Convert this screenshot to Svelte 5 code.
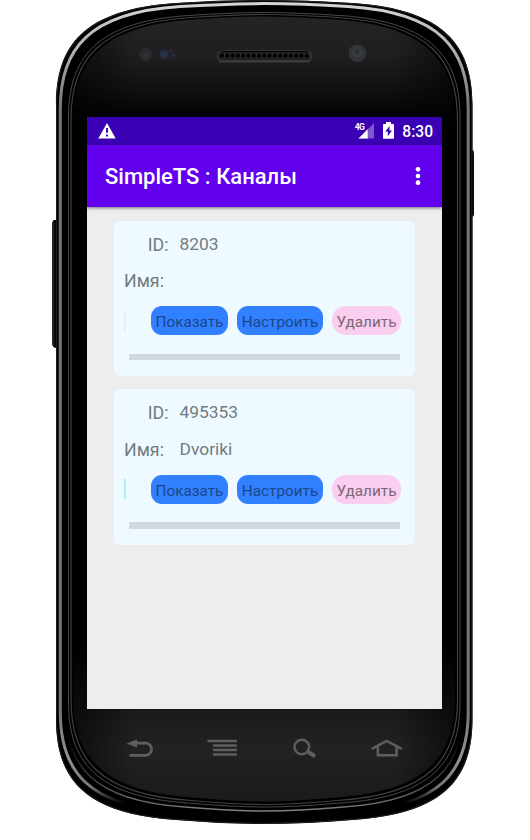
<script>
  const channels = [
    { id: '8203', name: '', mark: '#e3eff7' },
    { id: '495353', name: 'Dvoriki', mark: '#aeeeee' }
  ];

  // Rounded phone contour inset to the given left, top and bottom edges.
  function contour(l, t, b) {
    const r = 528.5 - l;
    return `M${l} ${t + 105}C${l} ${t + 47} ${l + 26} ${t + 9} ${l + 120} ${t + 3}` +
      `Q${l + 165} ${t} 264 ${t}T${r - 120} ${t + 3}` +
      `C${r - 26} ${t + 9} ${r} ${t + 47} ${r} ${t + 105}V${b - 105}` +
      `C${r} ${b - 47} ${r - 26} ${b - 10} ${r - 120} ${b - 4}` +
      `Q${r - 165} ${b} 264 ${b}T${l + 120} ${b - 4}` +
      `C${l + 26} ${b - 10} ${l} ${b - 47} ${l} ${b - 105}Z`;
  }
  const holes = Array.from({ length: 17 }, (_, i) => 222 + i * 5.3);
</script>

<main class="phone">
  <svg class="shell" width="530" height="840" viewBox="0 0 530 840" aria-hidden="true">
    <defs>
      <linearGradient id="rim" x1="0" y1="0" x2="0" y2="824" gradientUnits="userSpaceOnUse">
        <stop offset="0" stop-color="#d8d8d8" />
        <stop offset=".06" stop-color="#b0b0b0" />
        <stop offset=".13" stop-color="#777" />
        <stop offset=".86" stop-color="#777" />
        <stop offset=".92" stop-color="#909090" />
        <stop offset=".955" stop-color="#777" />
        <stop offset=".975" stop-color="#000" />
        <stop offset="1" stop-color="#000" />
      </linearGradient>
      <linearGradient id="lower" x1="0" y1="740" x2="0" y2="811" gradientUnits="userSpaceOnUse">
        <stop offset="0" stop-color="#777" stop-opacity="0" />
        <stop offset=".6" stop-color="#777" stop-opacity=".6" />
        <stop offset="1" stop-color="#808080" />
      </linearGradient>
      <linearGradient id="glass" x1="0" y1="14" x2="0" y2="803" gradientUnits="userSpaceOnUse">
        <stop offset="0" stop-color="#242424" />
        <stop offset=".05" stop-color="#1f1f1f" />
        <stop offset=".09" stop-color="#121212" />
        <stop offset=".13" stop-color="#030303" />
        <stop offset=".2" stop-color="#000" />
        <stop offset=".8" stop-color="#000" />
        <stop offset=".885" stop-color="#1a1a1a" />
        <stop offset=".93" stop-color="#222" />
        <stop offset="1" stop-color="#1a1a1a" />
      </linearGradient>
      <linearGradient id="side" x1="73" y1="0" x2="455.5" y2="0" gradientUnits="userSpaceOnUse">
        <stop offset="0" stop-color="#000" stop-opacity=".6" />
        <stop offset=".16" stop-color="#000" stop-opacity="0" />
        <stop offset=".84" stop-color="#000" stop-opacity="0" />
        <stop offset="1" stop-color="#000" stop-opacity=".6" />
      </linearGradient>
    </defs>
    <path d="M57 220h-3q-2 1-2 5v118q0 5 5 5zM471 150h2q1 1 1 4v60q0 3-3 3z" fill="#080808" />
    <path d="M53 223v122" stroke="#444" />
    <path d={contour(56, 0, 824)} fill="#000" />
    <path d={contour(56.6, .6, 823.4)} fill="none" stroke="#222" />
    <path d={contour(60.3, 3.6, 817)} fill="none" stroke="url(#rim)" stroke-width="3" />
    <path d={contour(65, 9, 811)} fill="none" stroke="url(#lower)" stroke-width="1.5" />
    <path d={contour(68.5, 12.500, 807)} fill="none" stroke="#484848" />
    <path d={contour(71, 14.500, 804.500)} fill="none" stroke="#404040" stroke-width="1.2" />
    <path d={contour(72.300, 15.500, 803)} fill="#000" />
    <path d={contour(73.500, 16.500, 801.500)} fill="url(#glass)" />
    <path d={contour(73.500, 16.500, 801.500)} fill="url(#side)" />

    <circle cx="145.8" cy="54.3" r="6.4" fill="#2c2b30" />
    <circle cx="145.8" cy="55" r="2.500" fill="#302f3c" />
    <rect x="158" y="48.5" width="20" height="11.5" rx="5.5" fill="#212328" />
    <circle cx="164" cy="54" r="4" fill="#253046" />
    <path d="M161 53q3 3 6 0M172 55l3 1" stroke="#353f57" fill="none" />
    <rect x="217.5" y="51" width="94" height="10" rx="4.5" fill="#202020" stroke="#383838" stroke-width="1.5" />
    <path d="M221 51.500h87" stroke="#050505" />
    <path d="M219 61.8h91" stroke="#4c4c4c" />
    {#each holes as x}
      <circle cx={x} cy="55.5" r="2.1" fill="#000" />
      <circle cx={x + 2.6} cy="54.500" r=".7" fill="#484848" />
    {/each}
    <circle cx="357.3" cy="53.2" r="8.8" fill="#31353a" />
    <circle cx="357.3" cy="52.2" r="5" fill="#373b42" />
    <circle cx="357.3" cy="51.6" r="2.2" fill="#282d35" />

    <g fill="none" stroke="#5e5e5e">
      <path d="M134 743.2h11.5a5.9 5.9 0 0 1 0 12.2H129.5" stroke-width="2.8" />
      <path d="M126.500 743.500l10.500-4v8z" fill="#5e5e5e" stroke="none" />
      <path d="M207.500 740.900h29.300M213 745.500h23.800M213 750.100h23.800M213 754.600h23.800" stroke-width="2.500" />
      <circle cx="301.8" cy="747" r="7.300" stroke-width="2.400" />
      <path d="M307.2 751.5l2.6 2" stroke-width="3" />
      <path d="M309.5 752.800l4.200 2.700" stroke-width="4" stroke-linecap="round" />
      <path d="M372.700 748.400L386.700 741L400.800 748.400" stroke-width="2.500" stroke-linecap="round" />
      <path d="M377.800 747v8.200H396.600v-8.200" stroke-width="2.500" />
    </g>
  </svg>

  <section class="screen">
    <div class="status">
      <svg class="warning" width="18" height="16" viewBox="0 0 18 16">
        <path d="M9 0L17.7 15.5H.3z" fill="#fff" />
        <path d="M9 5v4.8M9 11.4v2.2" stroke="#3a00b3" stroke-width="1.9" />
      </svg>
      <div class="network">
        <span class="generation">4G</span>
        <svg width="16" height="16" viewBox="0 0 16 16">
          <path d="M16 0v15.5H.5z" fill="#fff" opacity=".35" />
          <path d="M9.700 6.200v9.300H.5z" fill="#fff" />
        </svg>
      </div>
      <svg class="battery" width="11" height="17" viewBox="0 0 11 17">
        <path d="M3 0h5v2h2.200q.8 0 .8.8v13.200q0 .7-.8.7H.8Q0 16.700 0 16V2.800Q0 2 .8 2H3z" fill="#fff" />
        <path d="M6.700 4L2.200 9.500h2.600v4.700L9 8.500H6.400z" fill="#3a00b3" />
      </svg>
      <time>8:30</time>
    </div>
    <header>
      <h1>SimpleTS : Каналы</h1>
      <svg width="6" height="18" viewBox="0 0 6 18" fill="#fff">
        <circle cx="3" cy="2.300" r="2.350" /><circle cx="3" cy="9" r="2.350" /><circle cx="3" cy="15.700" r="2.350" />
      </svg>
    </header>
    <div class="list">
      {#each channels as channel}
        <article>
          <dl>
            <dt class="id">ID:</dt><dd>{channel.id}</dd>
            <dt>Имя:</dt><dd>{channel.name}</dd>
          </dl>
          <div class="actions">
            <i style:background={channel.mark}></i>
            <button class="show">Показать</button>
            <button class="setup">Настроить</button>
            <button class="remove">Удалить</button>
          </div>
          <div class="progress"></div>
        </article>
      {/each}
    </div>
  </section>
</main>

<style>
  :global(body) { margin: 0; background: #fff; }
  .phone {
    position: relative;
    box-sizing: border-box;
    width: 530px;
    height: 840px;
    padding: 117px 88px 0 87px;
    overflow: hidden;
    font-family: Roboto, sans-serif;
  }
  .shell { position: absolute; inset: 0; }
  .screen {
    position: relative;
    width: 355px;
    height: 592px;
    overflow: hidden;
    background: #ededed;
  }
  .status {
    display: flex;
    align-items: flex-start;
    box-sizing: border-box;
    height: 28px;
    padding: 6px 9px 0 11px;
    background: #3a00b3;
    color: #fff;
  }
  .warning { margin-right: auto; }
  .network { display: flex; align-items: flex-start; }
  .network svg { margin-left: -6px; }
  .generation { font-size: 8.5px; line-height: 8px; font-weight: 700; letter-spacing: -.5px; }
  .battery { margin: -1px 8px 0 9px; }
  time { font-size: 15.6px; line-height: 18px; font-weight: 500; }
  header {
    position: relative;
    display: flex;
    align-items: center;
    justify-content: space-between;
    box-sizing: border-box;
    height: 62px;
    padding: 0 21px 0 18px;
    background: #6200ee;
    box-shadow: 0 1px 3px #0008;
    color: #fff;
  }
  h1 { margin: 2px 0 0; font-size: 22px; line-height: 30px; font-weight: 500; white-space: nowrap; }
  .list { display: flex; flex-direction: column; gap: 13px; padding: 13.5px 27px; }
  article {
    box-sizing: border-box;
    height: 155.7px;
    padding: 5px 14px 0 10px;
    border-radius: 6px;
    background: #eefaff;
  }
  dl {
    display: grid;
    grid-template-columns: 44.5px 1fr;
    grid-template-rows: 36.7px 36.7px;
    column-gap: 11px;
    margin: 0;
    color: #737b7e;
    font-size: 17.4px;
    line-height: 37px;
  }
  dt { font-size: 17.8px; }
  .id { text-align: right; }
  dd { margin: 0; }
  .actions { display: flex; align-items: center; margin-top: 7px; height: 29.3px; }
  .actions i { width: 2px; height: 20px; margin-right: 25px; }
  button {
    height: 29.3px;
    padding: 3px 0 0;
    border: 0;
    border-radius: 11px;
    background: #3180ff;
    color: #1c4687;
    font: 15.3px/20px Roboto, sans-serif;
    white-space: nowrap;
  }
  .show { width: 77px; }
  .setup { width: 86px; margin: 0 9px; }
  .remove { width: 69px; border-radius: 14px; background: #faceee; color: #7d6777; }
  .progress { height: 6.5px; margin: 18.5px 1px 0 5px; background: #d1d9e0; }
</style>
